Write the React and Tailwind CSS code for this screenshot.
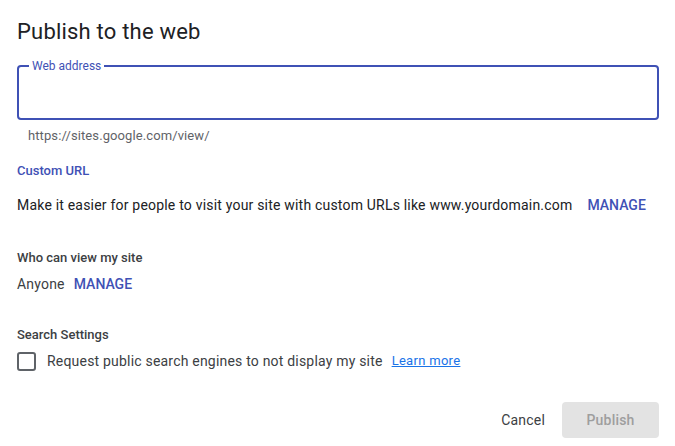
export default function App() {
  return (
    <div
      className="w-[675px] h-[446px] bg-white overflow-hidden pl-[17px] pr-[16px]"
      style={{ fontFamily: 'Roboto, "Noto Sans", sans-serif' }}
    >
      <h1 className="mt-[18px] text-[22px] leading-[28px] tracking-[0.2px] text-[#202124] font-normal">Publish to the web</h1>

      {/* Web address field */}
      <div className="relative mt-[19px] h-[55px] w-[642px] rounded-[4px] border-2 border-[#3f51b5]">
        <span className="absolute -top-[8px] left-[10px] bg-white px-[3px] text-[12px] leading-[14px] text-[#3f51b5]">
          Web address
        </span>
      </div>
      <p className="mt-2 pl-[11px] text-[13px] leading-[16px] tracking-[0.1px] text-[#5f6368]">https://sites.google.com/view/</p>

      {/* Custom URL */}
      <p className="mt-[19px] text-[13px] leading-[16px] font-medium text-[#3f51b5]">Custom URL</p>
      <div className="mt-[16px] flex items-center text-[14px] leading-[20px]">
        <span className="text-[#202124] tracking-[0.2px]">
          Make it easier for people to visit your site with custom URLs like www.yourdomain.com
        </span>
        <button className="ml-[15px] font-medium text-[#3f51b5]">MANAGE</button>
      </div>

      {/* Who can view */}
      <p className="mt-[35px] text-[13px] leading-[16px] font-medium text-[#3c4043]">Who can view my site</p>
      <div className="mt-[8px] flex items-center gap-[9px] text-[14px] leading-[20px]">
        <span className="text-[#3c4043] tracking-[0.2px]">Anyone</span>
        <button className="font-medium text-[#3f51b5]">MANAGE</button>
      </div>

      {/* Search settings */}
      <p className="mt-[33px] text-[13px] leading-[16px] font-medium text-[#3c4043]">Search Settings</p>
      <div className="mt-[8px] flex items-center h-[20px] text-[14px] leading-[20px]">
        <span className="w-[19px] h-[19px] rounded-[3px] border-2 border-[#5f6368] flex-shrink-0" />
        <span className="ml-[11px] text-[#3c4043] tracking-[0.2px]">Request public search engines to not display my site</span>
        <a className="ml-[9px] text-[13px] tracking-[0.3px] text-[#1a73e8] underline">Learn more</a>
      </div>

      {/* Actions */}
      <div className="mt-[31px] flex items-center justify-end">
        <button className="mr-[17px] text-[14px] leading-[20px] tracking-[0.2px] text-[#3c4043]">Cancel</button>
        <button className="w-[97px] h-[36px] rounded-[4px] bg-[#e3e3e3] text-[14px] font-medium tracking-[0.2px] text-[#9e9e9e]">
          Publish
        </button>
      </div>
    </div>
  )
}
